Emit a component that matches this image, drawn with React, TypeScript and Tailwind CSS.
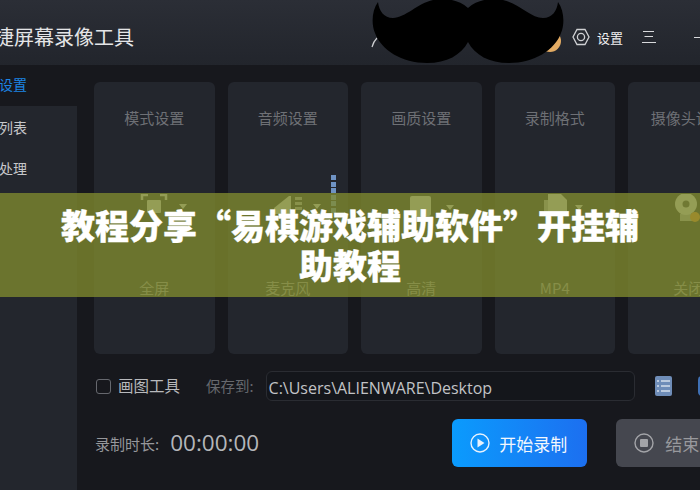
const FONT = "font-['Noto_Sans_CJK_SC','Noto_Sans',sans-serif]";

function IconFull() {
  return (
    <svg width="50" height="26" viewBox="0 0 50 26" className="block">
      <g fill="none" stroke="#d8dde0" strokeWidth="2.5">
        <path d="M3 6 L3 1 L9 1" />
        <path d="M21 1 L27 1 L27 6" />
      </g>
      <rect x="8" y="6" width="14" height="13" fill="#d8dde0" rx="1" />
      <path d="M40 10 L48 10 L44 15 Z" fill="#d8dde0" />
    </svg>
  );
}
function IconMic() {
  return (
    <svg width="60" height="26" viewBox="0 0 60 26" className="block">
      <path d="M2 14 L17 2 L19 2 L19 20 L2 20 Z" fill="#d8dde0" />
      <g fill="#a7adb3">
        <rect x="23" y="3" width="7" height="3" />
        <rect x="23" y="8" width="7" height="3" />
        <rect x="23" y="13" width="7" height="3" />
      </g>
      <path d="M41 10 L49 10 L45 15 Z" fill="#d8dde0" />
    </svg>
  );
}
function IconHd() {
  return (
    <svg width="50" height="26" viewBox="0 0 50 26" className="block">
      <rect x="2" y="2" width="21" height="20" rx="2" fill="#d8dde0" />
      <path d="M38 11 L46 11 L42 16 Z" fill="#d8dde0" />
    </svg>
  );
}
function IconMp4() {
  return (
    <svg width="50" height="26" viewBox="0 0 50 26" className="block">
      <path d="M3 6 L8 6 L8 21 L3 21 Z" fill="#a7adb3" />
      <path d="M7 0 L20 0 L26 6 L26 21 L7 21 Z" fill="#d8dde0" />
      <path d="M34 11 L42 11 L38 16 Z" fill="#d8dde0" />
    </svg>
  );
}
function IconCam() {
  return (
    <svg width="34" height="30" viewBox="0 0 34 30" className="block">
      <rect x="6" y="20" width="15" height="7" fill="#a7adb3" />
      <circle cx="12" cy="10" r="11" fill="#d8dde0" />
      <circle cx="12" cy="10" r="3.5" fill="#3a3d44" />
      <circle cx="21" cy="23" r="5" fill="#f08a24" />
    </svg>
  );
}

const cards = [
  { t: "模式设置", b: "全屏", icon: <IconFull />, ml: "ml-[45px]" },
  { t: "音频设置", b: "麦克风", icon: <IconMic />, ml: "ml-[44px]" },
  { t: "画质设置", b: "高清", icon: <IconHd />, ml: "ml-[47px]" },
  { t: "录制格式", b: "MP4", icon: <IconMp4 />, ml: "ml-[46px]" },
  { t: "摄像头设置", b: "关闭", icon: <IconCam />, ml: "ml-[46px]" },
];

export default function App() {
  return (
    <div className={`relative w-[700px] h-[490px] overflow-hidden bg-[#17181d] flex flex-col ${FONT}`}>
      <header className="h-[65px] shrink-0 flex items-center pt-[9px] bg-gradient-to-b from-[#2b2e36] to-[#22252c]">
        <span className="ml-[-26px] text-[20px] leading-none text-[#e4e5e7] whitespace-nowrap">便捷屏幕录像工具</span>
        <svg width="10" height="12" viewBox="0 0 10 12" className="ml-[237px] mt-[11px] shrink-0">
          <path d="M1 10 C2 6 3 4 6 1" fill="none" stroke="#cfd0d3" strokeWidth="1.2" />
        </svg>
        <div className="ml-[158px] mt-[8px] w-[22px] h-[22px] rounded-full bg-[#e3ab63] shrink-0" />
        <svg width="18" height="18" viewBox="0 0 18 18" className="ml-[11px] shrink-0">
          <path d="M5 1.5 L13 1.5 L17 9 L13 16.5 L5 16.5 L1 9 Z" fill="none" stroke="#d0d1d4" strokeWidth="1.3" />
          <circle cx="9" cy="9" r="3.6" fill="none" stroke="#d0d1d4" strokeWidth="1.3" />
        </svg>
        <span className="ml-[7px] text-[13px] leading-none text-[#f0f0f0] whitespace-nowrap">设置</span>
        <svg width="16" height="14" viewBox="0 0 16 14" className="ml-[18px] shrink-0">
          <path d="M2 1.5 H13 M3.5 6.5 H12 M1 12.5 H15" stroke="#d8d9dc" strokeWidth="1" />
        </svg>
        <div className="ml-[37px] w-[12px] h-px bg-[#d8d9dc] shrink-0" />
      </header>

      <div className="flex flex-1 min-h-0">
        <aside className="w-[77px] shrink-0 flex flex-col text-[14px] leading-none">
          <div className="h-[41px] shrink-0 flex items-center justify-end pr-[50px] pb-[4px] text-[#1c84e4] whitespace-nowrap">录制设置</div>
          <div className="flex-1 bg-[#23262d] flex flex-col items-end pr-[50px] pt-[14px] gap-[27px] text-[#c6c7ca] whitespace-nowrap">
            <span>录制列表</span>
            <span>视频处理</span>
          </div>
        </aside>

        <main className="flex-1 min-w-0 pl-[17px] pt-[17px] flex flex-col">
          <div className="flex gap-[13px] h-[272px] shrink-0">
            {cards.map((c, i) => (
              <div key={c.t} className="relative w-[120.5px] shrink-0 rounded-md bg-[#23262d] flex flex-col overflow-hidden">
                <div className="mt-[26px] text-[15px] leading-[20px] text-[#6e7075] text-center whitespace-nowrap">{c.t}</div>
                <div className={`mt-[66px] h-[30px] ${c.ml}`}>{c.icon}</div>
                <div className="mt-[54px] text-[15px] leading-[20px] text-[#9a9ca2] text-center whitespace-nowrap">{c.b}</div>
                {i === 1 && (
                  <div className="absolute left-[103px] top-[93px] flex flex-col gap-[1.5px]">
                    {[0, 1, 2, 3, 4, 5].map((n) => (
                      <div key={n} className="w-[5px] h-[5px] bg-[#6f93c4]" />
                    ))}
                  </div>
                )}
              </div>
            ))}
          </div>

          <div className="mt-[17px] h-[30px] flex items-center shrink-0">
            <div className="ml-[2px] w-[15px] h-[15px] rounded-[3px] border border-[#66686e] shrink-0" />
            <span className="ml-[7px] text-[15.5px] leading-none text-[#b8b9bc] whitespace-nowrap">画图工具</span>
            <span className="ml-[26px] text-[14.5px] leading-none text-[#66686d] whitespace-nowrap">保存到:</span>
            <div className="ml-[12px] w-[369px] h-[30px] shrink-0 rounded-md border border-[#2a2c32] bg-[#14161b] flex items-center pl-[2px] pt-[3px] text-[16px] leading-none text-[#c2c3c6] whitespace-nowrap font-['Open_Sans',sans-serif]">
              C:\Users\ALIENWARE\Desktop
            </div>
            <svg width="17" height="20" viewBox="0 0 17 20" className="ml-[20px] shrink-0">
              <rect width="17" height="20" rx="2" fill="#6f8db8" />
              <path d="M2 5 H4 M6 5 H15 M2 10 H4 M6 10 H15 M2 15 H4 M6 15 H15" stroke="#d5deea" strokeWidth="1.4" />
            </svg>
            <div className="ml-[26px] w-[17px] h-[20px] rounded-sm bg-[#3f70b4] shrink-0" />
          </div>

          <div className="mt-[18px] h-[48px] flex items-center shrink-0">
            <span className="ml-[1px] text-[15px] leading-none text-[#96979b] whitespace-nowrap">录制时长:</span>
            <span className="ml-[11px] text-[22.5px] leading-none text-[#b4b6ba] whitespace-nowrap font-['Open_Sans',sans-serif]">00:00:00</span>
            <button className="ml-[193px] w-[135px] h-[48px] shrink-0 rounded-md bg-gradient-to-r from-[#0a9bfd] to-[#1c6ff0] flex items-center pl-[18px] text-[17px] leading-none text-[#f2f7fd] whitespace-nowrap">
              <svg width="20" height="20" viewBox="0 0 20 20" className="shrink-0">
                <circle cx="10" cy="10" r="9" fill="none" stroke="#e7f2fd" strokeWidth="1.4" />
                <path d="M7.5 5.5 L14.5 10 L7.5 14.5 Z" fill="#e7f2fd" />
              </svg>
              <span className="ml-[9px]">开始录制</span>
            </button>
            <button className="ml-[29px] w-[135px] h-[48px] shrink-0 rounded-md bg-[#45474f] flex items-center pl-[18px] text-[17px] leading-none text-[#98999d] whitespace-nowrap">
              <svg width="20" height="20" viewBox="0 0 20 20" className="shrink-0">
                <circle cx="10" cy="10" r="9" fill="none" stroke="#a3a4a8" strokeWidth="1.4" />
                <rect x="6" y="6" width="8" height="8" rx="1" fill="#a3a4a8" />
              </svg>
              <span className="ml-[11px]">结束录制</span>
            </button>
          </div>
        </main>
      </div>

      {/* Title banner lying over the window */}
      <div className="absolute left-0 right-0 top-[193px] h-[104px] bg-[#808a2e]/[.78] flex items-center justify-center">
        <h1 className="w-[600px] text-center text-[34px] leading-[40px] font-black text-white [-webkit-text-stroke:0.3px_white]">
          教程分享“易棋游戏辅助软件”开挂辅助教程
        </h1>
      </div>

      {/* Black moustache sticker lying over the header */}
      <svg width="192" height="64" viewBox="372 0 192 64" className="absolute left-[372px] top-0">
        <path
          d="M468 8 C458 -1 445 -2 433 0 C418 3 405 18 393 18 C384 18 379 11 378 2 C372 10 371 24 375 33 C381 50 402 63 427 63 C447 63 461 55 468 42 C475 55 489 63 509 63 C534 63 555 50 561 33 C565 24 564 10 558 2 C557 11 552 18 543 18 C531 18 518 3 503 0 C491 -2 478 -1 468 8 Z"
          fill="#000"
        />
      </svg>
    </div>
  );
}
